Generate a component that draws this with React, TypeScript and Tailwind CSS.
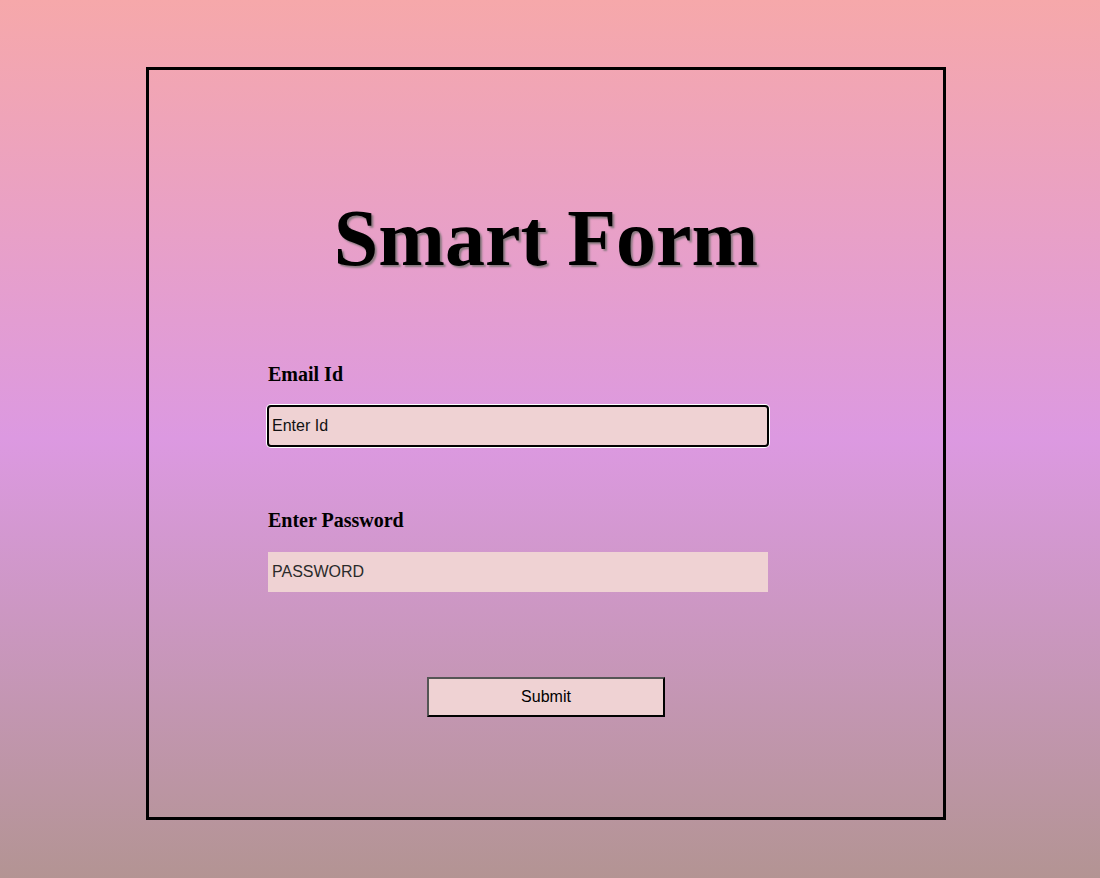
export default function App() {
  return (
    <div className="min-h-screen w-full bg-[linear-gradient(to_bottom,#f6a8aa_0%,#dc99e1_50%,#b39493_100%)] pt-[67px] font-['Liberation_Serif',serif]">
      <div className="ml-[146px] w-[800px] border-[3px] border-black pt-[128px] pb-[100px]">
        <h1 className="text-center text-[80px] leading-none font-bold text-black [text-shadow:2px_2px_2px_#8a7a80]">
          Smart Form
        </h1>

        <form className="mt-[86px] flex flex-col pl-[119px]" onSubmit={(e) => e.preventDefault()}>
          <label htmlFor="email" className="text-[20px] leading-none font-bold text-black">
            Email Id
          </label>
          <input
            id="email"
            type="text"
            placeholder="Enter Id"
            className="mt-[22px] h-[40px] w-[500px] rounded-[3px] bg-[#efd2d3] px-[4px] font-['Liberation_Sans',Arial,sans-serif] text-[16px] text-black outline-2 outline-black outline-offset-[-1px] shadow-[0_0_0_2px_#ffffff] placeholder:text-[#111]"
          />

          <label htmlFor="password" className="mt-[64px] text-[20px] leading-none font-bold text-black">
            Enter Password
          </label>
          <input
            id="password"
            type="password"
            placeholder="PASSWORD"
            className="mt-[22px] h-[40px] w-[500px] bg-[#efd2d3] px-[4px] font-['Liberation_Sans',Arial,sans-serif] text-[16px] text-black outline-none placeholder:text-[#2a2a2a]"
          />

          <button
            type="submit"
            className="mt-[85px] ml-[159px] h-[40px] w-[238px] border-2 border-t-[#555] border-l-[#555] border-r-black border-b-black bg-[#efd2d3] font-['Liberation_Sans',Arial,sans-serif] text-[16px] text-black"
          >
            Submit
          </button>
        </form>
      </div>
    </div>
  );
}
